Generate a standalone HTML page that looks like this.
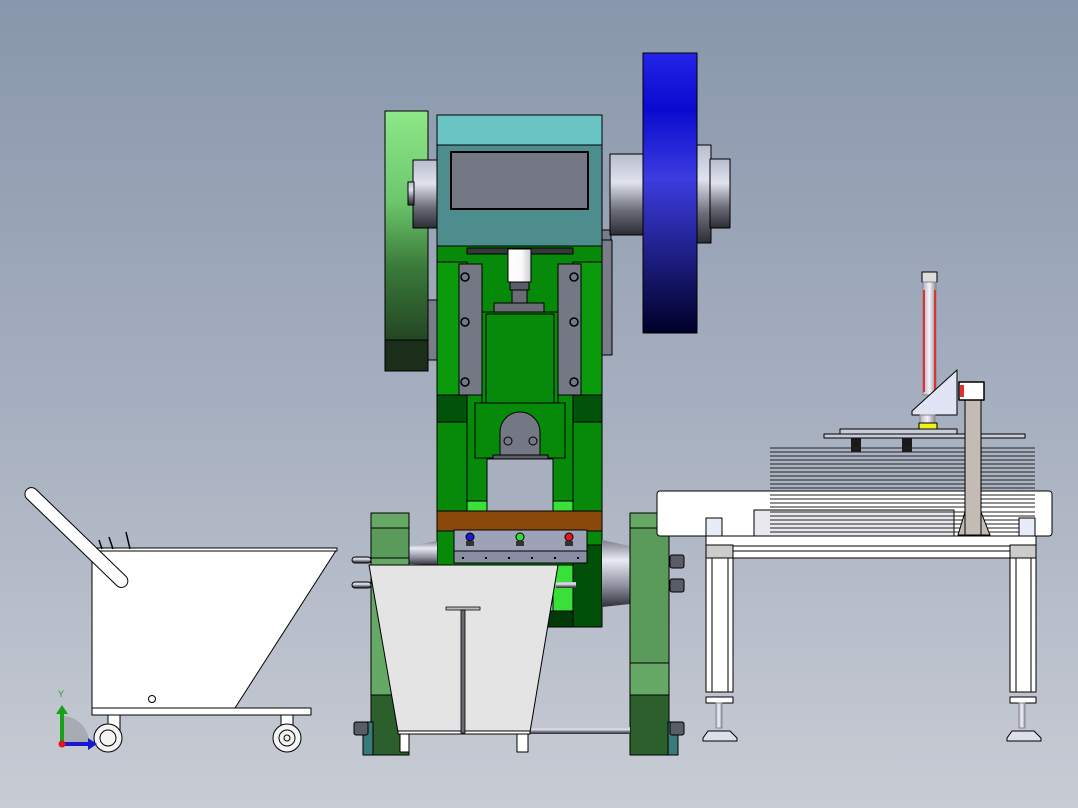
<!DOCTYPE html>
<html><head><meta charset="utf-8"><style>html,body{margin:0;padding:0;width:1078px;height:808px;overflow:hidden}svg{display:block}</style></head><body>
<svg width="1078" height="808" viewBox="0 0 1078 808" xmlns="http://www.w3.org/2000/svg" stroke-linejoin="round">
<defs>
<linearGradient id="bg" x1="0" y1="0" x2="0" y2="1"><stop offset="0" stop-color="#8897ab"/><stop offset="0.5" stop-color="#a6afbf"/><stop offset="1" stop-color="#c8ccd4"/></linearGradient>
<linearGradient id="gfly" x1="0" y1="0" x2="0" y2="1"><stop offset="0" stop-color="#8ee888"/><stop offset="0.35" stop-color="#6cc66c"/><stop offset="0.6" stop-color="#3a7a3a"/><stop offset="1" stop-color="#1a301a"/></linearGradient>
<linearGradient id="bfly" x1="0" y1="0" x2="0" y2="1"><stop offset="0" stop-color="#2424e8"/><stop offset="0.2" stop-color="#0a0ad0"/><stop offset="0.45" stop-color="#3c3ce0"/><stop offset="1" stop-color="#000028"/></linearGradient>
<linearGradient id="shaft" x1="0" y1="0" x2="0" y2="1"><stop offset="0" stop-color="#b8bccc"/><stop offset="0.35" stop-color="#e0e2ee"/><stop offset="0.7" stop-color="#6a6c78"/><stop offset="1" stop-color="#2c2c34"/></linearGradient>
<linearGradient id="cone" x1="0" y1="0" x2="0" y2="1"><stop offset="0" stop-color="#7c7e8c"/><stop offset="0.3" stop-color="#e8eaf4"/><stop offset="0.7" stop-color="#8a8c9a"/><stop offset="1" stop-color="#30303a"/></linearGradient>
<linearGradient id="ram" x1="0" y1="0" x2="1" y2="0"><stop offset="0" stop-color="#fff"/><stop offset="0.6" stop-color="#fafafa"/><stop offset="1" stop-color="#c8c8d0"/></linearGradient>
<linearGradient id="vrod" x1="0" y1="0" x2="1" y2="0"><stop offset="0" stop-color="#b0b4c4"/><stop offset="0.5" stop-color="#f4f4fa"/><stop offset="1" stop-color="#8a8c9a"/></linearGradient>
</defs>
<rect width="1078" height="808" fill="url(#bg)"/>

<!-- ===== PRESS ===== -->
<!-- left flywheel -->
<rect x="385" y="111" width="43" height="260" fill="url(#gfly)" stroke="#000"/>
<rect x="385" y="340" width="43" height="31" fill="#1a2e1a" stroke="#000"/>
<rect x="428" y="300" width="9" height="60" fill="#7a7c88" stroke="#000"/>
<rect x="413" y="160" width="24" height="68" fill="url(#shaft)" stroke="#000"/>
<rect x="408" y="182" width="6" height="23" fill="url(#shaft)" stroke="#000"/>
<!-- right shaft & flywheel -->
<rect x="602" y="230" width="9" height="15" fill="#7a7c88" stroke="#000"/>
<rect x="602" y="240" width="10" height="115" fill="#7a7c88" stroke="#000"/>
<rect x="610" y="154" width="34" height="81" fill="url(#shaft)" stroke="#000"/>
<rect x="696" y="145" width="15" height="98" fill="url(#shaft)" stroke="#000"/>
<rect x="710" y="159" width="20" height="69" fill="url(#shaft)" stroke="#000"/>
<rect x="643" y="53" width="54" height="280" fill="url(#bfly)" stroke="#000"/>
<!-- head -->
<rect x="437" y="115" width="165" height="30" fill="#6ac4c4" stroke="#000"/>
<rect x="437" y="145" width="165" height="101" fill="#4d8d8d" stroke="#000"/>
<rect x="451" y="152" width="137" height="57" fill="#747884" stroke="#000" stroke-width="2"/>
<!-- green body -->
<rect x="437" y="246" width="165" height="266" fill="#078a0a" stroke="#000"/>
<rect x="467" y="248" width="106" height="6" fill="#333a3a" stroke="#000"/>
<rect x="437" y="262" width="30" height="133" fill="#0a9a0c" stroke="#000"/>
<rect x="573" y="262" width="29" height="133" fill="#0a9a0c" stroke="#000"/>
<rect x="459" y="264" width="23" height="131" fill="#747884" stroke="#000"/>
<rect x="558" y="264" width="23" height="131" fill="#747884" stroke="#000"/>
<g fill="none" stroke="#000" stroke-width="1.5">
<circle cx="465" cy="277" r="4"/><circle cx="465" cy="322" r="4"/><circle cx="465" cy="382" r="4"/>
<circle cx="574" cy="277" r="4"/><circle cx="574" cy="322" r="4"/><circle cx="574" cy="382" r="4"/>
</g>
<rect x="508" y="249" width="23" height="33" fill="url(#ram)" stroke="#000"/>
<rect x="510" y="282" width="19" height="8" fill="#5a5c68" stroke="#000"/>
<rect x="512" y="290" width="15" height="13" fill="#6a6c78" stroke="#000"/>
<rect x="494" y="303" width="50" height="9" fill="#6a6c78" stroke="#000"/>
<rect x="482" y="312" width="76" height="98" fill="#078a0a" stroke="#000"/>
<rect x="486" y="314" width="68" height="96" fill="none" stroke="#000"/>
<!-- lower body -->
<rect x="437" y="395" width="30" height="27" fill="#03520a" stroke="#000"/>
<rect x="573" y="395" width="29" height="27" fill="#03520a" stroke="#000"/>
<rect x="437" y="422" width="30" height="90" fill="#078a0a" stroke="#000"/>
<rect x="573" y="422" width="29" height="90" fill="#078a0a" stroke="#000"/>
<rect x="475" y="403" width="90" height="55" fill="#078a0a" stroke="#000"/>
<path d="M500 455 L500 432 A20 20 0 0 1 540 432 L540 455 Z" fill="#747884" stroke="#000"/>
<circle cx="508" cy="441" r="4" fill="none" stroke="#000"/><circle cx="533" cy="441" r="4" fill="none" stroke="#000"/>
<rect x="493" y="455" width="55" height="9" fill="#5a5c68" stroke="#000"/>
<rect x="487" y="459" width="66" height="53" fill="#a8b0c0" stroke="#000"/>
<rect x="467" y="501" width="20" height="11" fill="#3ae03a" stroke="#000"/>
<rect x="553" y="501" width="20" height="11" fill="#3ae03a" stroke="#000"/>
<rect x="437" y="511" width="165" height="20" fill="#8b4a0c" stroke="#000"/>
<rect x="437" y="531" width="165" height="35" fill="#078a0a" stroke="#000"/>
<rect x="573" y="545" width="29" height="82" fill="#00500a" stroke="#000"/>
<rect x="553" y="565" width="20" height="47" fill="#3ae03a" stroke="#000"/>
<rect x="545" y="611" width="28" height="16" fill="#003a08" stroke="#000"/>
<!-- cones -->
<path d="M409 546 L437 541 L437 565 L409 564 Z" fill="url(#cone)"/>
<path d="M602 540 L630 546 L630 604 L602 607 Z" fill="url(#cone)"/>
<rect x="352" y="557" width="19" height="6" rx="3" fill="url(#shaft)" stroke="#000"/>
<rect x="352" y="582" width="19" height="6" rx="3" fill="url(#shaft)" stroke="#000"/>
<rect x="556" y="582" width="20" height="6" fill="url(#shaft)"/>
<!-- side frames -->
<rect x="371" y="513" width="38" height="183" fill="#66a866" stroke="#000"/>
<rect x="371" y="528" width="38" height="30" fill="#5a9a5a" stroke="#000"/>
<rect x="371" y="695" width="38" height="60" fill="#2c5f2c" stroke="#000"/>
<rect x="363" y="722" width="10" height="33" fill="#3a7a7a" stroke="#000"/>
<rect x="630" y="513" width="39" height="183" fill="#66a866" stroke="#000"/>
<rect x="630" y="528" width="39" height="135" fill="#5a9a5a" stroke="#000"/>
<rect x="630" y="695" width="39" height="60" fill="#2c5f2c" stroke="#000"/>
<rect x="668" y="722" width="10" height="33" fill="#3a7a7a" stroke="#000"/>
<g fill="#5a5c68" stroke="#000">
<rect x="670" y="555" width="14" height="13" rx="2"/><rect x="670" y="579" width="14" height="13" rx="2"/>
<rect x="670" y="722" width="14" height="13" rx="2"/><rect x="354" y="722" width="14" height="13" rx="2"/>
</g>
<rect x="530" y="727" width="100" height="7" fill="url(#shaft)"/>
<!-- control panel -->
<rect x="454" y="530" width="133" height="21" fill="#9ea2b8" stroke="#000"/>
<rect x="454" y="551" width="133" height="12" fill="#8a8ea2" stroke="#000"/>
<circle cx="470" cy="537" r="4" fill="#1a1ad0" stroke="#000"/><rect x="466" y="541" width="8" height="5" fill="#333"/>
<circle cx="520" cy="537" r="4" fill="#30e030" stroke="#000"/><rect x="516" y="541" width="8" height="5" fill="#333"/>
<circle cx="569" cy="537" r="4" fill="#e01a1a" stroke="#000"/><rect x="565" y="541" width="8" height="5" fill="#333"/>
<g fill="#000"><rect x="462" y="557" width="2" height="2"/><rect x="485" y="557" width="2" height="2"/><rect x="508" y="557" width="2" height="2"/><rect x="531" y="557" width="2" height="2"/><rect x="554" y="557" width="2" height="2"/><rect x="577" y="557" width="2" height="2"/></g>
<!-- hopper -->
<path d="M369 565 L558 565 L530 732 L398 732 Z" fill="#e4e4e4" stroke="#000"/>
<rect x="398" y="731" width="132" height="3" fill="#fff" stroke="#000"/>
<rect x="446" y="607" width="34" height="3" fill="#bbb" stroke="#000" stroke-width="0.8"/>
<rect x="461" y="610" width="4" height="123" fill="#6a6a72" stroke="#000" stroke-width="0.8"/>
<rect x="400" y="734" width="9" height="18" fill="#fff" stroke="#000"/>
<rect x="517" y="734" width="11" height="18" fill="#fff" stroke="#000"/>

<!-- ===== CART ===== -->
<path d="M92 549 L337 549 L235 708 L92 708 Z" fill="#fff" stroke="#000"/>
<rect x="92" y="548" width="245" height="3" fill="#fff" stroke="#000"/>
<g stroke="#000" stroke-width="1.5" fill="none"><path d="M99 540 L102 549"/><path d="M109 537 L113 549"/><path d="M126 532 L130 549"/></g>
<g transform="translate(30,492) rotate(44)"><rect x="-4" y="-6" width="138" height="13" rx="6.5" fill="#fff" stroke="#000"/></g>
<circle cx="152" cy="699" r="3.5" fill="none" stroke="#000"/>
<rect x="92" y="708" width="219" height="7" fill="#fff" stroke="#000"/>
<rect x="108" y="715" width="12" height="18" fill="#fff" stroke="#000"/>
<rect x="281" y="715" width="12" height="18" fill="#fff" stroke="#000"/>
<circle cx="108" cy="738" r="14" fill="#f4f4f4" stroke="#000"/><circle cx="108" cy="738" r="8" fill="none" stroke="#000"/>
<circle cx="287" cy="738" r="14" fill="#f4f4f4" stroke="#000"/><circle cx="287" cy="738" r="8" fill="none" stroke="#000"/><circle cx="287" cy="738" r="3" fill="none" stroke="#000"/>
<!-- axis triad -->
<path d="M62 744 L62 716 A27 27 0 0 1 89 744 Z" fill="#9aa0a8" opacity="0.7"/>
<rect x="60" y="713" width="4" height="31" fill="#18a018"/><path d="M56 714 L62 705 L68 714 Z" fill="#18a018"/>
<rect x="62" y="742" width="28" height="4" fill="#1818d0"/><path d="M88 738 L97 744 L88 750 Z" fill="#1818d0"/>
<circle cx="62" cy="744" r="3.5" fill="#e01818"/>
<text x="58" y="697" font-family="Liberation Sans, sans-serif" font-size="9" fill="#18a018">Y</text>

<!-- ===== TABLE ===== -->
<!-- cylinder -->
<rect x="922" y="272" width="15" height="10" fill="#ddd" stroke="#000"/>
<rect x="923" y="282" width="13" height="113" fill="url(#vrod)" stroke="#888"/>
<rect x="923" y="290" width="2" height="102" fill="#e03030"/><rect x="934" y="290" width="2" height="102" fill="#e03030"/>
<path d="M912 411 L957 370 L957 415 L912 415 Z" fill="#e0e4f4" stroke="#000"/>
<rect x="920" y="415" width="15" height="10" fill="url(#vrod)" stroke="#888"/>
<rect x="919" y="423" width="18" height="6" fill="#f0f020" stroke="#000"/>
<rect x="840" y="429" width="117" height="5" fill="#c8ccd8" stroke="#000"/>
<rect x="824" y="434" width="201" height="4" fill="#c8ccd8" stroke="#000"/>
<rect x="851" y="438" width="10" height="14" fill="#1a1a1a"/><rect x="902" y="438" width="10" height="14" fill="#1a1a1a"/>
<!-- sheet stack -->
<g stroke="#222" stroke-width="0.9">
<line x1="770" y1="448" x2="1035" y2="448"/><line x1="770" y1="452" x2="1035" y2="452"/><line x1="770" y1="456" x2="1035" y2="456"/><line x1="770" y1="460" x2="1035" y2="460"/><line x1="770" y1="464" x2="1035" y2="464"/><line x1="770" y1="468" x2="1035" y2="468"/><line x1="770" y1="472" x2="1035" y2="472"/><line x1="770" y1="476" x2="1035" y2="476"/><line x1="770" y1="480" x2="1035" y2="480"/><line x1="770" y1="484" x2="1035" y2="484"/><line x1="770" y1="488" x2="1035" y2="488"/>
</g>
<rect x="657" y="491" width="395" height="45" rx="3" fill="#fff" stroke="#000"/>
<rect x="754" y="510" width="200" height="26" fill="#e8e8ee" stroke="#000"/>
<g stroke="#222" stroke-width="0.9">
<line x1="770" y1="495" x2="1035" y2="495"/><line x1="770" y1="499" x2="1035" y2="499"/><line x1="770" y1="503" x2="1035" y2="503"/><line x1="770" y1="507" x2="1035" y2="507"/><line x1="770" y1="512" x2="1035" y2="512"/><line x1="770" y1="516" x2="1035" y2="516"/><line x1="770" y1="520" x2="1035" y2="520"/><line x1="770" y1="524" x2="1035" y2="524"/><line x1="770" y1="528" x2="1035" y2="528"/><line x1="770" y1="532" x2="1035" y2="532"/>
</g>
<rect x="706" y="518" width="16" height="18" fill="#e8ecf8" stroke="#000"/>
<rect x="1019" y="518" width="16" height="18" fill="#e8ecf8" stroke="#000"/>
<!-- post -->
<path d="M958 535 L965 512 L981 512 L990 535 Z" fill="#c4bcb4" stroke="#000"/>
<rect x="965" y="398" width="16" height="137" fill="#c4bcb4" stroke="#000"/>
<rect x="959" y="382" width="25" height="18" fill="#fff" stroke="#000" stroke-width="1.5"/>
<rect x="960" y="385" width="4" height="12" fill="#e03030"/>
<!-- rail -->
<rect x="706" y="536" width="330" height="22" fill="#fff" stroke="#000"/>
<line x1="733" y1="546" x2="1010" y2="546" stroke="#000"/><line x1="733" y1="551" x2="1010" y2="551" stroke="#000"/>
<rect x="706" y="545" width="27" height="13" fill="#ccc" stroke="#000"/>
<rect x="1010" y="545" width="26" height="13" fill="#ccc" stroke="#000"/>
<!-- legs -->
<rect x="706" y="558" width="27" height="134" fill="#fff" stroke="#000"/>
<line x1="712" y1="558" x2="712" y2="692" stroke="#000"/><line x1="728" y1="558" x2="728" y2="692" stroke="#000"/>
<rect x="1010" y="558" width="26" height="134" fill="#fff" stroke="#000"/>
<line x1="1016" y1="558" x2="1016" y2="692" stroke="#000"/><line x1="1031" y1="558" x2="1031" y2="692" stroke="#000"/>
<rect x="706" y="697" width="27" height="6" fill="#fff" stroke="#000"/>
<rect x="1010" y="697" width="26" height="6" fill="#fff" stroke="#000"/>
<rect x="716" y="703" width="6" height="25" fill="url(#vrod)" stroke="#888"/>
<rect x="1019" y="703" width="6" height="25" fill="url(#vrod)" stroke="#888"/>
<path d="M703 738 L708 731 L730 731 L737 738 L737 741 L703 741 Z" fill="#dde0ec" stroke="#000"/>
<path d="M1007 738 L1012 731 L1034 731 L1041 738 L1041 741 L1007 741 Z" fill="#dde0ec" stroke="#000"/>
</svg>
</body></html>
